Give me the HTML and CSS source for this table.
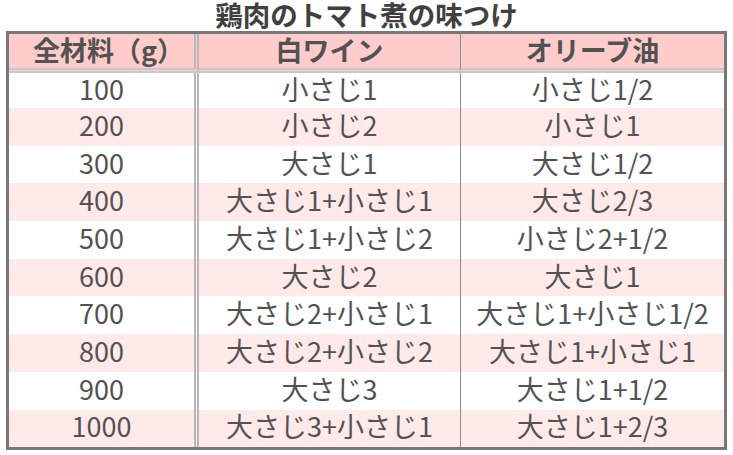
FILE: index.html
```html
<!DOCTYPE html>
<html lang="ja">
<head>
<meta charset="utf-8">
<link rel="stylesheet" href="styles.css">
</head>
<body>
<div class="wrap">
  <div class="title">鶏肉のトマト煮の味つけ</div>
  <table class="tbl">
    <thead>
      <tr><th class="first">全材料（g）</th><th>白ワイン</th><th>オリーブ油</th></tr>
    </thead>
    <tbody>
      <tr><td>100</td><td>小さじ1</td><td>小さじ1/2</td></tr>
      <tr><td>200</td><td>小さじ2</td><td>小さじ1</td></tr>
      <tr><td>300</td><td>大さじ1</td><td>大さじ1/2</td></tr>
      <tr><td>400</td><td>大さじ1+小さじ1</td><td>大さじ2/3</td></tr>
      <tr><td>500</td><td>大さじ1+小さじ2</td><td>小さじ2+1/2</td></tr>
      <tr><td>600</td><td>大さじ2</td><td>大さじ1</td></tr>
      <tr><td>700</td><td>大さじ2+小さじ1</td><td>大さじ1+小さじ1/2</td></tr>
      <tr><td>800</td><td>大さじ2+小さじ2</td><td>大さじ1+小さじ1</td></tr>
      <tr><td>900</td><td>大さじ3</td><td>大さじ1+1/2</td></tr>
      <tr><td>1000</td><td>大さじ3+小さじ1</td><td>大さじ1+2/3</td></tr>
    </tbody>
  </table>
</div>
</body>
</html>
```
FILE: styles.css
```css
html, body {
  margin: 0;
  padding: 0;
  background: #ffffff;
}
.wrap {
  width: 721px;
  padding-left: 6px;
  font-family: "Noto Sans CJK JP", "Noto Sans", sans-serif;
  color: #525252;
}
.title {
  height: 31px;
  line-height: 28px;
  font-size: 27.5px;
  font-weight: bold;
  text-align: center;
  color: #404040;
}
.tbl {
  width: 721px;
  border-collapse: separate;
  border-spacing: 0;
  border: 3px solid #787878;
  table-layout: fixed;
}
.tbl th, .tbl td {
  text-align: center;
  font-size: 27px;
  white-space: nowrap;
}
.tbl th:nth-child(1), .tbl td:nth-child(1) {
  width: 185px;
  border-right: 5px double #b8b8b8;
}
.tbl th:nth-child(2), .tbl td:nth-child(2) {
  width: 261px;
  border-right: 1px solid #8a8a8a;
}
.tbl thead tr {
  height: 39px;
}
.tbl th {
  padding: 0 0 3px 0;
  line-height: 30px;
  font-weight: bold;
  background: #ffcccc;
  border-bottom: 5px double #c8c8c8;
}
.tbl th.first {
  width: 171px;
  padding-left: 14px;
}
.tbl tbody tr {
  height: 37.7px;
}
.tbl tbody tr:first-child {
  height: 35px;
}
.tbl td {
  padding: 0 0 4px 0;
  line-height: 30px;
}
.tbl tbody tr:nth-child(even) td {
  background: #ffe9e9;
}
```
